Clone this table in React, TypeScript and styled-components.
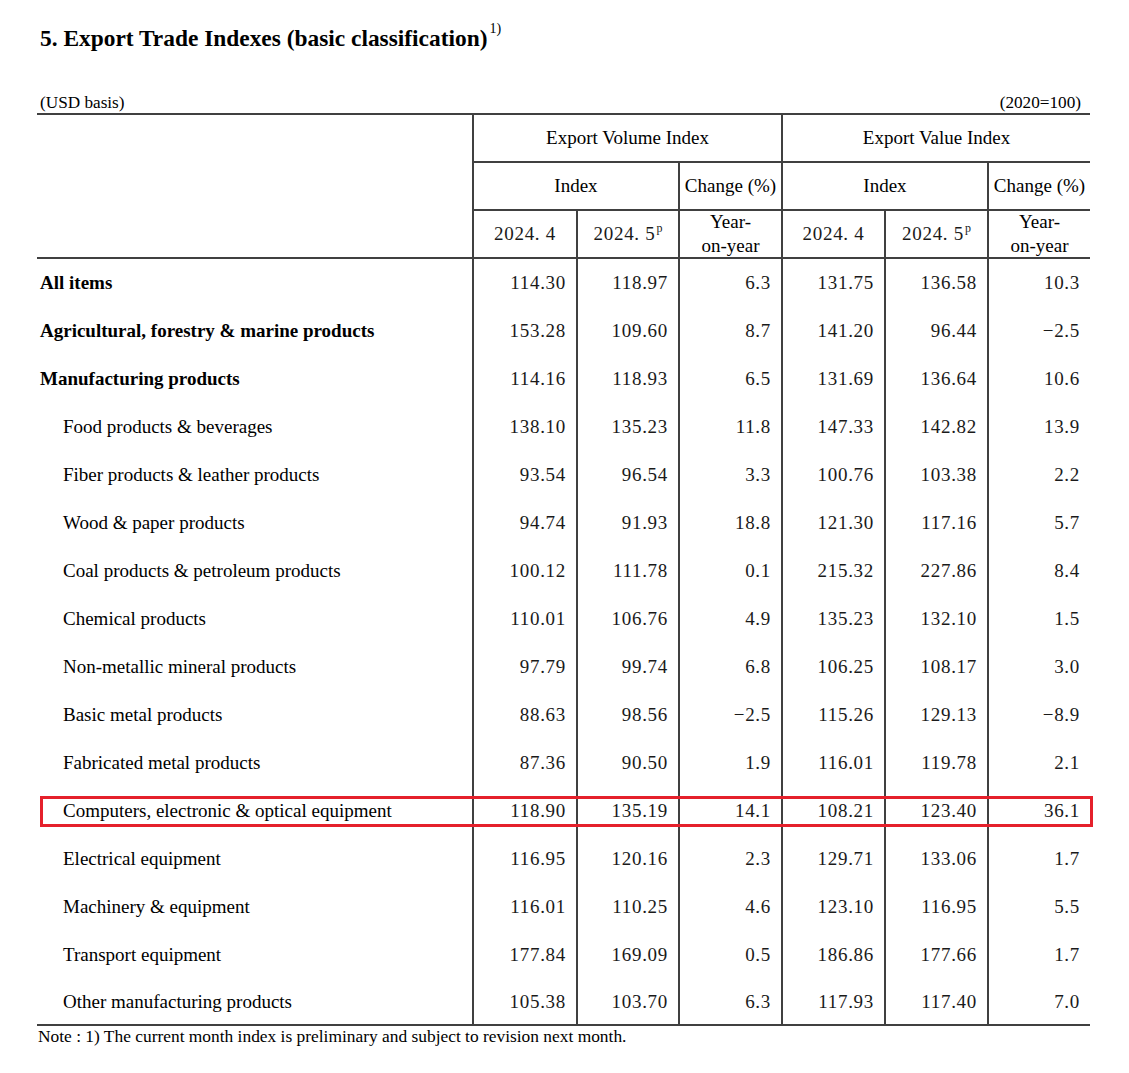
import React from "react";
import styled, { createGlobalStyle } from "styled-components";

const Global = createGlobalStyle`
  html, body { margin: 0; padding: 0; background: #fff; }
  body { font-family: "Liberation Serif", "Times New Roman", serif; color: #000; }
`;

const LINE = "#404040";

const Page = styled.div`
  width: 1053px;
  padding: 0 39px 0 37px;
`;

const Title = styled.h1`
  margin: 0;
  padding: 24px 0 0 3px;
  line-height: 28px;
  font-size: 23.4px;
  font-weight: bold;
  sup {
    font-size: 14px;
    font-weight: normal;
    vertical-align: 13px;
    line-height: 0;
    margin-left: 2px;
  }
`;

const Caption = styled.div`
  display: flex;
  justify-content: space-between;
  margin-top: 41px;
  padding: 0 9px 0 3px;
  line-height: 20px;
  font-size: 17.2px;
`;

const Grid = styled.div`
  display: grid;
  grid-template-columns: 435px 104px 102px 103px 103px 103px 103px;
  grid-template-rows: repeat(18, 48px) 45px;
  border-top: 2px solid ${LINE};
  border-bottom: 2px solid ${LINE};
  font-size: 19px;
`;

const Corner = styled.div`
  grid-column: 1;
  grid-row: 1 / span 3;
  border-bottom: 2px solid ${LINE};
`;

const Head = styled.div<{ $col: string; $row: number }>`
  grid-column: ${(p) => p.$col};
  grid-row: ${(p) => p.$row};
  border-left: 2px solid ${LINE};
  border-bottom: 2px solid ${LINE};
  display: flex;
  align-items: center;
  justify-content: center;
  text-align: center;
  line-height: 24px;
  white-space: nowrap;
`;

const Digits = styled.span`
  letter-spacing: 0.7px;
  color: #1a1a1a;
  sup {
    font-size: 12px;
    letter-spacing: 0;
    vertical-align: 8px;
    line-height: 0;
    margin-left: 1px;
  }
`;

const Label = styled.div<{ $bold?: boolean; $row: number }>`
  grid-column: 1;
  grid-row: ${(p) => p.$row};
  display: flex;
  align-items: center;
  padding-left: ${(p) => (p.$bold ? "3px" : "26px")};
  font-weight: ${(p) => (p.$bold ? "bold" : "normal")};
  white-space: nowrap;
`;

const Num = styled.div<{ $row: number; $col: number; $last?: boolean }>`
  grid-column: ${(p) => p.$col};
  grid-row: ${(p) => p.$row};
  border-left: 2px solid ${LINE};
  display: flex;
  align-items: center;
  justify-content: flex-end;
  padding-right: 10px;
  padding-bottom: ${(p) => (p.$last ? "0" : "0")};
  letter-spacing: 0.7px;
  color: #1a1a1a;
`;

const Highlight = styled.div<{ $row: number }>`
  grid-column: 1 / -1;
  grid-row: ${(p) => p.$row};
  margin: 9px -3px 8px 3px;
  border: 3px solid #e5202b;
  pointer-events: none;
  z-index: 1;
`;

const Note = styled.div`
  padding-left: 1px;
  line-height: 20px;
  font-size: 17.4px;
`;

type Row = { label: string; bold?: boolean; v: string[] };

const rows: Row[] = [
  { label: "All items", bold: true, v: ["114.30", "118.97", "6.3", "131.75", "136.58", "10.3"] },
  { label: "Agricultural, forestry & marine products", bold: true, v: ["153.28", "109.60", "8.7", "141.20", "96.44", "−2.5"] },
  { label: "Manufacturing products", bold: true, v: ["114.16", "118.93", "6.5", "131.69", "136.64", "10.6"] },
  { label: "Food products & beverages", v: ["138.10", "135.23", "11.8", "147.33", "142.82", "13.9"] },
  { label: "Fiber products & leather products", v: ["93.54", "96.54", "3.3", "100.76", "103.38", "2.2"] },
  { label: "Wood & paper products", v: ["94.74", "91.93", "18.8", "121.30", "117.16", "5.7"] },
  { label: "Coal products & petroleum products", v: ["100.12", "111.78", "0.1", "215.32", "227.86", "8.4"] },
  { label: "Chemical products", v: ["110.01", "106.76", "4.9", "135.23", "132.10", "1.5"] },
  { label: "Non-metallic mineral products", v: ["97.79", "99.74", "6.8", "106.25", "108.17", "3.0"] },
  { label: "Basic metal products", v: ["88.63", "98.56", "−2.5", "115.26", "129.13", "−8.9"] },
  { label: "Fabricated metal products", v: ["87.36", "90.50", "1.9", "116.01", "119.78", "2.1"] },
  { label: "Computers, electronic & optical equipment", v: ["118.90", "135.19", "14.1", "108.21", "123.40", "36.1"] },
  { label: "Electrical equipment", v: ["116.95", "120.16", "2.3", "129.71", "133.06", "1.7"] },
  { label: "Machinery & equipment", v: ["116.01", "110.25", "4.6", "123.10", "116.95", "5.5"] },
  { label: "Transport equipment", v: ["177.84", "169.09", "0.5", "186.86", "177.66", "1.7"] },
  { label: "Other manufacturing products", v: ["105.38", "103.70", "6.3", "117.93", "117.40", "7.0"] },
];

const HIGHLIGHT_INDEX = 11;

export default function App() {
  return (
    <Page>
      <Global />
      <Title>
        5. Export Trade Indexes (basic classification)<sup>1)</sup>
      </Title>
      <Caption>
        <span>(USD basis)</span>
        <span>(2020=100)</span>
      </Caption>
      <Grid>
        <Corner />
        <Head $col="2 / span 3" $row={1}>Export Volume Index</Head>
        <Head $col="5 / span 3" $row={1}>Export Value Index</Head>
        <Head $col="2 / span 2" $row={2}>Index</Head>
        <Head $col="4" $row={2}>Change (%)</Head>
        <Head $col="5 / span 2" $row={2}>Index</Head>
        <Head $col="7" $row={2}>Change (%)</Head>
        <Head $col="2" $row={3}>
          <Digits>2024. 4</Digits>
        </Head>
        <Head $col="3" $row={3}>
          <Digits>
            2024. 5<sup>p</sup>
          </Digits>
        </Head>
        <Head $col="4" $row={3}>
          <span>
            Year-
            <br />
            on-year
          </span>
        </Head>
        <Head $col="5" $row={3}>
          <Digits>2024. 4</Digits>
        </Head>
        <Head $col="6" $row={3}>
          <Digits>
            2024. 5<sup>p</sup>
          </Digits>
        </Head>
        <Head $col="7" $row={3}>
          <span>
            Year-
            <br />
            on-year
          </span>
        </Head>
        {rows.map((r, ri) => (
          <React.Fragment key={r.label}>
            <Label $bold={r.bold} $row={4 + ri}>
              {r.label}
            </Label>
            {r.v.map((x, i) => (
              <Num key={i} $row={4 + ri} $col={2 + i}>
                {x}
              </Num>
            ))}
          </React.Fragment>
        ))}
        <Highlight $row={4 + HIGHLIGHT_INDEX} />
      </Grid>
      <Note>Note : 1) The current month index is preliminary and subject to revision next month.</Note>
    </Page>
  );
}
